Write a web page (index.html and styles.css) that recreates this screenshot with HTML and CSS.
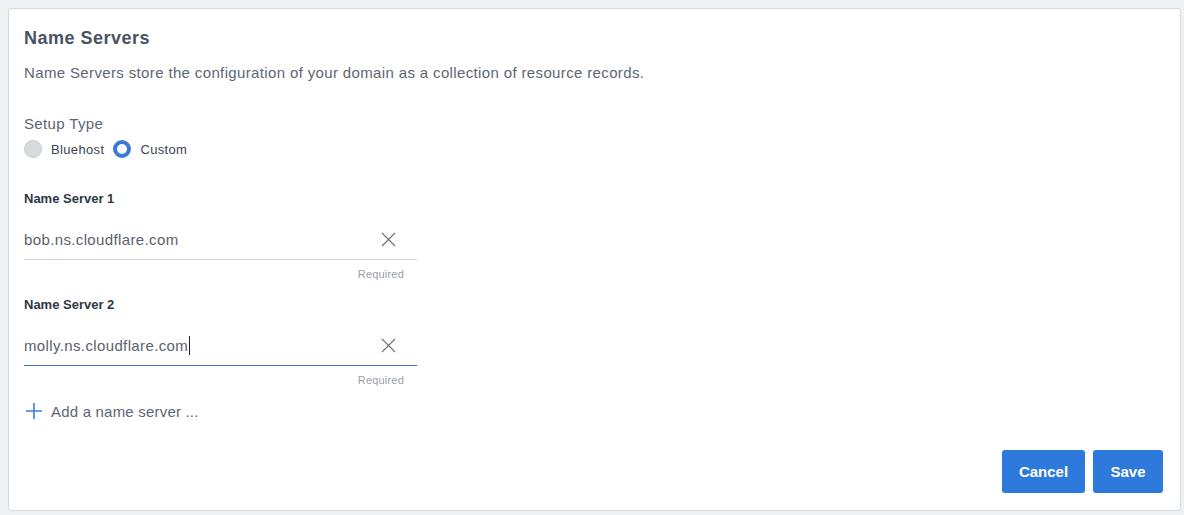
FILE: index.html
```html
<!DOCTYPE html>
<html>
<head>
<meta charset="utf-8">
<link rel="stylesheet" href="styles.css">
</head>
<body>
<div class="card">
  <h2 class="title">Name Servers</h2>
  <p class="desc">Name Servers store the configuration of your domain as a collection of resource records.</p>
  <div class="setup-label">Setup Type</div>
  <div class="radios">
    <label class="radio"><span class="dot dot-off"></span><span>Bluehost</span></label>
    <label class="radio"><span class="dot dot-on"></span><span>Custom</span></label>
  </div>

  <div class="field">
    <div class="field-label">Name Server 1</div>
    <div class="input">
      <span class="value">bob.ns.cloudflare.com</span>
      <svg class="clear" width="15" height="15" viewBox="0 0 15 15"><path d="M1 1 L14 14 M14 1 L1 14" stroke="#6b7079" stroke-width="1.1" fill="none"/></svg>
    </div>
    <div class="hint">Required</div>
  </div>

  <div class="field field2">
    <div class="field-label">Name Server 2</div>
    <div class="input input-focus">
      <span class="value">molly.ns.cloudflare.com<span class="caret"></span></span>
      <svg class="clear" width="15" height="15" viewBox="0 0 15 15"><path d="M1 1 L14 14 M14 1 L1 14" stroke="#6b7079" stroke-width="1.1" fill="none"/></svg>
    </div>
    <div class="hint">Required</div>
  </div>

  <div class="add">
    <svg width="18" height="18" viewBox="0 0 18 18"><path d="M9 1 V17 M1 9 H17" stroke="#3d7ddb" stroke-width="1.6" fill="none"/></svg>
    <span>Add a name server ...</span>
  </div>

  <div class="actions">
    <button class="btn btn-cancel">Cancel</button>
    <button class="btn btn-save">Save</button>
  </div>
</div>
</body>
</html>
```
FILE: styles.css
```css
html, body {
  margin: 0;
  padding: 0;
  background: #eff2f5;
}
body {
  padding: 8px;
  font-family: "Liberation Sans", Arial, sans-serif;
}
.card {
  background: #fff;
  border: 1px solid #d6dadf;
  border-radius: 3px;
  padding: 17px 17px 16px 15px;
  height: 503px;
  box-sizing: border-box;
  width: 1173px;
}
.title {
  margin: 0;
  font-size: 18px;
  line-height: 24px;
  font-weight: 700;
  letter-spacing: 0.5px;
  color: #4a5362;
}
.desc {
  margin: 13px 0 0;
  font-size: 15px;
  line-height: 20px;
  letter-spacing: 0.36px;
  color: #5d6674;
}
.setup-label {
  margin-top: 31px;
  font-size: 15px;
  line-height: 20px;
  letter-spacing: 0.36px;
  color: #5d6674;
}
.radios {
  margin-top: 5px;
  display: flex;
  align-items: center;
  height: 20px;
  gap: 9px;
}
.radio {
  display: flex;
  align-items: center;
  gap: 9px;
  font-size: 13px;
  letter-spacing: 0.35px;
  color: #3c4452;
}
.dot {
  width: 18px;
  height: 18px;
  border-radius: 50%;
  box-sizing: border-box;
  display: inline-block;
}
.dot-off {
  background: #d7dadf;
  border: 1px solid #c8ccd2;
}
.dot-on {
  background: #fff;
  border: 4px solid #3a7bd8;
}
.field {
  margin-top: 31px;
  width: 393px;
}
.field2 {
  margin-top: 15px;
}
.field-label {
  font-size: 13px;
  line-height: 18px;
  font-weight: 700;
  color: #2f3744;
}
.input {
  margin-top: 12px;
  height: 40px;
  box-sizing: border-box;
  border-bottom: 1px solid #d2d5da;
  display: flex;
  align-items: center;
  justify-content: space-between;
  padding-right: 21px;
  padding-bottom: 1px;
}
.input-focus {
  border-bottom-color: #3f74cf;
}
.value {
  font-size: 15px;
  letter-spacing: 0.37px;
  color: #5b616b;
  display: flex;
  align-items: center;
}
.caret {
  display: inline-block;
  width: 1px;
  height: 19px;
  background: #222;
  margin-left: 1px;
}
.clear {
  display: block;
}
.hint {
  margin-top: 7px;
  padding-right: 13px;
  text-align: right;
  font-size: 11px;
  line-height: 14px;
  letter-spacing: 0.2px;
  color: #9aa0a8;
}
.add {
  margin-top: 14px;
  display: flex;
  align-items: center;
  gap: 8px;
  height: 20px;
  font-size: 15px;
  letter-spacing: 0.2px;
  color: #5d6674;
  padding-left: 1px;
}
.add svg {
  display: block;
}
.actions {
  margin-top: 29px;
  display: flex;
  justify-content: flex-end;
  gap: 8px;
}
.btn {
  height: 43px;
  border: none;
  border-radius: 3px;
  background: #2e79dc;
  color: #fff;
  font-family: "Liberation Sans", Arial, sans-serif;
  font-size: 15px;
  font-weight: 600;
  padding: 0;
}
.btn-cancel {
  width: 83px;
}
.btn-save {
  width: 70px;
}
```
